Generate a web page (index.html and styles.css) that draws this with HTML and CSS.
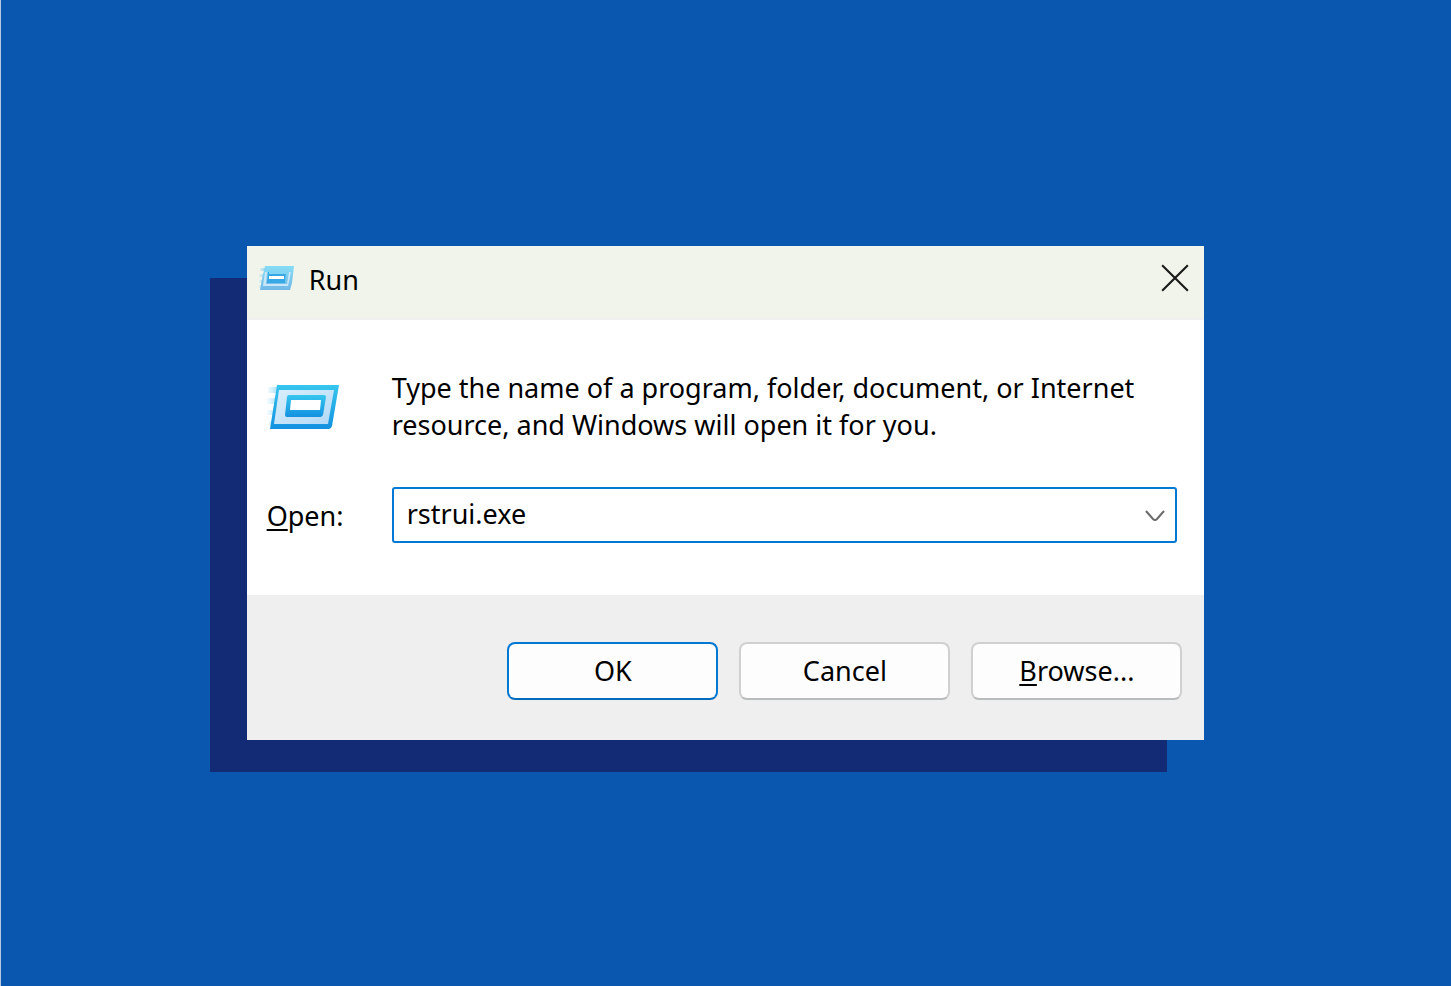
FILE: index.html
```html
<!DOCTYPE html>
<html lang="en">
<head>
<meta charset="utf-8">
<meta name="viewport" content="width=device-width, initial-scale=1">
<title>Run</title>
<link rel="stylesheet" href="styles.css">
</head>
<body>
<svg class="defs" width="0" height="0" aria-hidden="true">
  <defs>
    <linearGradient id="frame" x1="0" y1="0" x2="0" y2="1">
      <stop offset="0" stop-color="#36c6ee"/>
      <stop offset="1" stop-color="#1391e0"/>
    </linearGradient>
    <linearGradient id="pane" x1="0" y1="0" x2="1" y2="1">
      <stop offset="0" stop-color="#d9effc"/>
      <stop offset="1" stop-color="#b3d9f6"/>
    </linearGradient>
    <linearGradient id="trail" x1="0" y1="0" x2="1" y2="0">
      <stop offset="0" stop-color="#7fd0f3" stop-opacity="0.15"/>
      <stop offset="1" stop-color="#4fbcee"/>
    </linearGradient>
    <linearGradient id="small-frame" x1="0" y1="0" x2="0" y2="1">
      <stop offset="0" stop-color="#86dcf5"/>
      <stop offset="1" stop-color="#71b8e8"/>
    </linearGradient>
  </defs>
</svg>
<main class="desktop">
  <form class="dialog" aria-labelledby="title">
    <header class="titlebar">
      <svg class="title-icon" viewBox="0 0 36 26" aria-hidden="true">
        <path d="M1 3h6v3H1zM0 9h6v3H0zM0 15h5v3H0zM0 20h4v3H0z" fill="url(#trail)" opacity=".7"/>
        <path d="M6 1H35L33 18L31 25H1L3 14Z" fill="url(#small-frame)"/>
        <path d="M6 7H8L7 19H28L30 7H32L29 21H4Z" fill="#c9e5f7"/>
        <path d="M9 7H27L26 18H8Z" fill="#36a8e6"/>
        <path d="M10 6H27V9H10Z" fill="#7fd4f4"/>
        <path d="M10 11H25V14H10Z" fill="#fff"/>
      </svg>
      <h1 class="title" id="title">Run</h1>
      <button class="close" type="button" aria-label="Close">
        <svg class="close-icon" viewBox="0 0 28 28" aria-hidden="true"><path d="M2 2L26 26M26 2L2 26"/></svg>
      </button>
    </header>
    <div class="content">
      <svg class="run-icon" viewBox="0 0 72 46" aria-hidden="true">
        <path d="M1 3H12V9H1zM0 14H10V20H0zM0 26H9V31H0zM2 37H7V42H2z" fill="url(#trail)" opacity=".55"/>
        <path d="M10 1H72L65 42Q64 45 62 45H3Z" fill="url(#frame)"/>
        <path d="M12 6H67L61 40H7Z" fill="url(#pane)"/>
        <path d="M22 11H57Q59 11 59 13L56 31Q55 33 53 33H20Q18 33 18 31L20 13Q20 11 22 11Z" fill="url(#frame)"/>
        <path d="M24 16H54L53 26H23Z" fill="#fff"/>
      </svg>
      <p class="message">Type the name of a program, folder, document, or Internet resource, and Windows will open it for you.</p>
      <label class="label" for="open"><u>O</u>pen:</label>
      <div class="combo">
        <input class="entry" id="open" type="text" value="rstrui.exe" spellcheck="false" autocomplete="off">
        <button class="drop" type="button" aria-label="Show recent commands">
          <svg class="drop-icon" viewBox="0 0 22 14" aria-hidden="true"><path d="M2 2L9 10Q11 12 13 10L20 2"/></svg>
        </button>
      </div>
    </div>
    <footer class="actions">
      <button class="button primary" type="button">OK</button>
      <button class="button" type="button">Cancel</button>
      <button class="button" type="button"><u>B</u>rowse...</button>
    </footer>
  </form>
</main>
</body>
</html>
```
FILE: styles.css
```css
* {
  box-sizing: border-box;
}

body {
  margin: 0;
  background: #0a57b0;
  color: #000;
  font: 27px/37px "Noto Sans", "Open Sans", sans-serif;
}

.defs {
  position: absolute;
}

.desktop {
  min-height: 100vh;
  display: grid;
  align-items: center;
  padding: 32px 17%;
  box-shadow: inset 1px 0 0 #b9cbe3;
}

.dialog {
  background: #fff;
  box-shadow: -37px 32px 0 #122b74;
}

.titlebar {
  display: flex;
  align-items: center;
  height: 74px;
  padding: 0 14px 8px 12px;
  background: #f1f4ea;
  border-bottom: 2px solid #f0f0f0;
}

.title-icon {
  width: 36px;
  height: 26px;
}

.title {
  flex: 1;
  margin: 2px 0 0 14px;
  font-size: 27px;
  font-weight: 400;
}

.close {
  display: flex;
  padding: 0;
  border: 0;
  background: none;
}

.close-icon {
  width: 30px;
  height: 30px;
  fill: none;
  stroke: #1b1b1b;
  stroke-width: 2;
}

.content {
  display: grid;
  grid-template-columns: 125px 1fr;
  align-items: center;
  row-gap: 44px;
  padding: 49px 27px 52px 20px;
}

.run-icon {
  width: 72px;
  height: 46px;
  margin-top: 2px;
}

.message {
  margin: 0;
}

.combo {
  display: flex;
  align-items: center;
  height: 56px;
  border: 2px solid #0078d4;
  border-radius: 3px;
}

.entry {
  flex: 1;
  min-width: 0;
  height: 100%;
  padding: 0 0 4px 13px;
  border: 0;
  outline: 0;
  background: none;
  color: inherit;
  font: inherit;
}

.drop {
  display: flex;
  padding: 2px 9px 0;
  border: 0;
  background: none;
}

.drop-icon {
  width: 22px;
  height: 14px;
  fill: none;
  stroke: #6b6b6b;
  stroke-width: 2;
}

.actions {
  display: flex;
  justify-content: flex-end;
  gap: 21px;
  padding: 47px 22px 40px;
  background: #efefef;
}

.button {
  width: 211px;
  height: 58px;
  padding: 0 0 2px;
  border: 2px solid #d0d0d0;
  border-bottom-color: #b9bcbc;
  border-radius: 8px;
  background: #fdfdfd;
  color: inherit;
  font: inherit;
}

.primary {
  border-color: #0078d4;
  border-bottom-color: #006cbe;
}

u {
  text-decoration-thickness: 2px;
  text-underline-offset: 3px;
  text-decoration-skip-ink: none;
}
```
